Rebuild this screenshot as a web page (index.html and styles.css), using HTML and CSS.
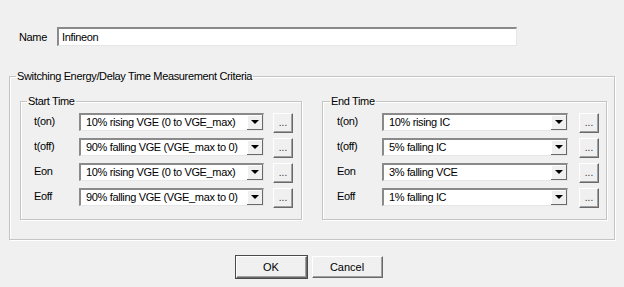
FILE: index.html
```html
<!DOCTYPE html>
<html lang="en">
<head>
  <meta charset="UTF-8">
  <title>Measurement Criteria</title>
  <link rel="stylesheet" href="styles.css">
</head>
<body>
  <div class="dialog">

    <!-- name -->
    <div class="name-row">
      <label class="name-label">Name</label>
      <div class="textbox">Infineon</div>
    </div>

    <fieldset class="group outer">
      <legend>Switching Energy/Delay Time Measurement Criteria</legend>
      <div class="columns">

        <fieldset class="group inner">
          <legend>Start Time</legend>
          <div class="row">
            <span class="row-label">t(on)</span>
            <div class="combo"><span class="combo-text">10% rising VGE (0 to VGE_max)</span><span class="drop"></span></div>
            <button class="more">...</button>
          </div>
          <div class="row">
            <span class="row-label">t(off)</span>
            <div class="combo"><span class="combo-text">90% falling VGE (VGE_max to 0)</span><span class="drop"></span></div>
            <button class="more">...</button>
          </div>
          <div class="row">
            <span class="row-label">Eon</span>
            <div class="combo"><span class="combo-text">10% rising VGE (0 to VGE_max)</span><span class="drop"></span></div>
            <button class="more">...</button>
          </div>
          <div class="row">
            <span class="row-label">Eoff</span>
            <div class="combo"><span class="combo-text">90% falling VGE (VGE_max to 0)</span><span class="drop"></span></div>
            <button class="more">...</button>
          </div>
        </fieldset>

        <fieldset class="group inner end">
          <legend>End Time</legend>
          <div class="row">
            <span class="row-label">t(on)</span>
            <div class="combo"><span class="combo-text">10% rising IC</span><span class="drop"></span></div>
            <button class="more">...</button>
          </div>
          <div class="row">
            <span class="row-label">t(off)</span>
            <div class="combo"><span class="combo-text">5% falling IC</span><span class="drop"></span></div>
            <button class="more">...</button>
          </div>
          <div class="row">
            <span class="row-label">Eon</span>
            <div class="combo"><span class="combo-text">3% falling VCE</span><span class="drop"></span></div>
            <button class="more">...</button>
          </div>
          <div class="row">
            <span class="row-label">Eoff</span>
            <div class="combo"><span class="combo-text">1% falling IC</span><span class="drop"></span></div>
            <button class="more">...</button>
          </div>
        </fieldset>

      </div>
    </fieldset>

    <div class="buttons">
      <button class="btn default">OK</button>
      <button class="btn">Cancel</button>
    </div>
  </div>
</body>
</html>
```

FILE: styles.css
```css
body {
  margin: 0;
  background: #f0f0f0;
  font-family: "Liberation Sans", Arial, sans-serif;
  font-size: 11px;
  letter-spacing: -0.35px;
  color: #000;
}

.dialog {
  width: 624px;
  height: 287px;
  padding-top: 27px;
  box-sizing: border-box;
}

.name-row {
  display: flex;
  align-items: center;
  padding-left: 19px;
}
.name-label {
  width: 38px;
}
.textbox {
  width: 460px;
  height: 19px;
  box-sizing: border-box;
  background: #fff;
  border-top: 2px solid #8a8a8a;
  border-left: 2px solid #8a8a8a;
  border-right: 1px solid #e6e6e6;
  border-bottom: 1px solid #e6e6e6;
  padding: 1px 3px 0;
  line-height: 15px;
}

/* group boxes */
.group {
  margin: 0;
  border: 1px solid #c4c4c4;
  box-shadow: 1px 1px 0 #fff, inset 1px 1px 0 #fff;
  min-width: 0;
}
.group legend {
  padding: 0 1px;
  line-height: 13px;
}
.outer {
  margin: 24px 9px 0;
  width: 606px;
  height: 170px;
  box-sizing: border-box;
  padding: 12px 7px 0 10px;
}
.outer > legend {
  margin-left: -4px;
}
.columns {
  display: grid;
  grid-template-columns: 282px 285px;
  column-gap: 20px;
}
.inner {
  height: 125px;
  box-sizing: border-box;
  padding: 5px 8px 0 13px;
}
.inner > legend {
  margin-left: -7px;
}
.end {
  padding-left: 14px;
  padding-right: 7px;
}
.end .combo {
  margin-right: 11px;
}

.row {
  display: flex;
  align-items: flex-start;
  height: 20px;
  margin-bottom: 5px;
}
.row-label {
  width: 45px;
  line-height: 17px;
}
.combo {
  flex: 1;
  display: flex;
  height: 18px;
  box-sizing: border-box;
  background: #fff;
  border-top: 2px solid #8a8a8a;
  border-left: 2px solid #8a8a8a;
  border-right: 1px solid #e6e6e6;
  border-bottom: 1px solid #e6e6e6;
  margin-right: 9px;
}
.combo-text {
  flex: 1;
  padding-left: 5px;
  line-height: 14px;
  white-space: nowrap;
  overflow: hidden;
}
.drop {
  width: 16px;
  background: #f0f0f0;
  border-right: 1px solid #696969;
  border-bottom: 1px solid #696969;
  box-shadow: inset 1px 1px 0 #fff;
  box-sizing: border-box;
  position: relative;
}
.drop::after {
  content: "";
  position: absolute;
  left: 4px;
  top: 5px;
  border-left: 4px solid transparent;
  border-right: 4px solid transparent;
  border-top: 4px solid #000;
}

.more {
  width: 20px;
  height: 20px;
  padding: 0;
  margin: 0;
  font: inherit;
  font-size: 10px;
  line-height: 14px;
  color: #333;
  background: #f0f0f0;
  border: 1px solid;
  border-color: #fff #696969 #696969 #fff;
  box-shadow: inset -1px -1px 0 #a0a0a0;
}

.buttons {
  display: flex;
  justify-content: center;
  gap: 5px;
  margin-top: 16px;
  padding-right: 6px;
}
.btn {
  width: 71px;
  height: 22px;
  padding: 0;
  font: inherit;
  color: #000;
  background: #f0f0f0;
  border: 1px solid;
  border-color: #fff #696969 #696969 #fff;
  box-shadow: inset -1px -1px 0 #a0a0a0;
}
.btn.default {
  outline: 1px solid #4a4a4a;
}
```
